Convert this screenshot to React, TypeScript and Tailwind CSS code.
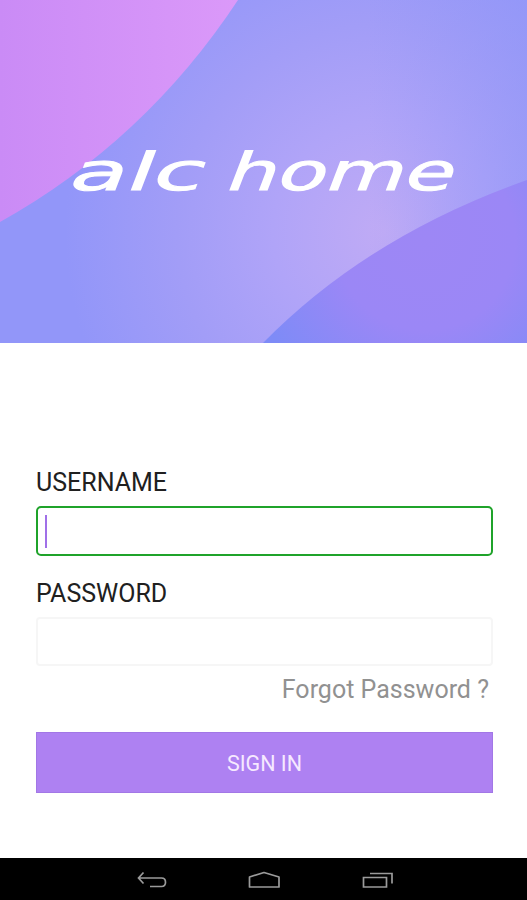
function Hero() {
  return (
    <svg className="block h-[343px] w-full shrink-0" viewBox="0 0 527 343" role="img" aria-label="alc home">
      <defs>
        <radialGradient id="glow" gradientUnits="userSpaceOnUse" cx="385" cy="232" r="320">
          <stop offset="0" stopColor="#c0abf5" />
          <stop offset="0.35" stopColor="#b0a4f8" />
          <stop offset="0.65" stopColor="#a29df7" />
          <stop offset="1" stopColor="#9296f9" />
        </radialGradient>
        <linearGradient id="edge" x1="0" y1="0" x2="1" y2="0">
          <stop offset="0.7" stopColor="#8f96f8" stopOpacity="0" />
          <stop offset="1" stopColor="#8f96f8" stopOpacity="0.5" />
        </linearGradient>
        <linearGradient id="pink" x1="0" y1="0" x2="1" y2="0">
          <stop offset="0" stopColor="#ca8bf6" />
          <stop offset="1" stopColor="#db99f9" />
        </linearGradient>
        <radialGradient id="violet" gradientUnits="userSpaceOnUse" cx="425" cy="240" r="180">
          <stop offset="0" stopColor="#9d87f5" />
          <stop offset="0.5" stopColor="#9b87f6" />
          <stop offset="1" stopColor="#7e8bf7" />
        </radialGradient>
      </defs>
      <rect width="527" height="343" fill="url(#glow)" />
      <rect width="527" height="343" fill="url(#edge)" />
      <path d="M0 0H238Q145 141 0 222Z" fill="url(#pink)" />
      <path d="M263 343Q368 236 527 180V343Z" fill="url(#violet)" />
      <g transform="translate(0 190) skewX(-21)" className="fill-white stroke-white stroke-1 font-['DejaVu_Sans'] text-[52px]">
        <text x="66" y="0" textLength="134" lengthAdjust="spacingAndGlyphs">alc</text>
        <text x="223" y="0" textLength="227" lengthAdjust="spacingAndGlyphs">home</text>
      </g>
    </svg>
  );
}

function NavBar() {
  return (
    <nav className="flex h-[42px] shrink-0 items-center bg-black pl-[136px] pt-[2px]">
      <svg className="h-[20px] w-[32px]" viewBox="0 0 32 20" fill="none" stroke="#9b9b9b" strokeWidth="1.7">
        <path d="M7.500 2.500L2.500 8L7.500 13.500M2.500 8H25.500Q29.500 8 29.500 12.250Q29.500 16.500 25.500 16.500H14" />
      </svg>
      <svg className="ml-[79px] h-[20px] w-[34px]" viewBox="0 0 34 20" fill="none" stroke="#9b9b9b" strokeWidth="1.7" strokeLinejoin="round">
        <path d="M2.500 17V7L17 2.500L32 7V17Z" />
      </svg>
      <svg className="ml-[80px] h-[20px] w-[34px]" viewBox="0 0 34 20" fill="none" stroke="#9b9b9b" strokeWidth="1.7">
        <path d="M2.500 7.500H25.500V17H2.500Z M9 3.500H31V13.500" />
      </svg>
    </nav>
  );
}

export default function App() {
  return (
    <div className="flex h-[900px] w-full flex-col overflow-hidden bg-white font-['Roboto',sans-serif]">
      <Hero />
      <form className="flex flex-1 flex-col pl-9 pr-[34px] pt-[123px]" onSubmit={(e) => e.preventDefault()}>
        <label htmlFor="username" className="h-10 text-[25px] leading-[33px] text-[#202020]">
          USERNAME
        </label>
        <div className="flex h-[50px] items-center rounded-[5px] border-2 border-[#1fa32a] pl-[7px]">
          <span className="h-[33px] w-[2px] bg-[#a070e8]" />
          <input id="username" className="min-w-0 flex-1 outline-none" />
        </div>
        <label htmlFor="password" className="mt-[21px] h-10 text-[25px] leading-[33px] text-[#202020]">
          PASSWORD
        </label>
        <input id="password" type="password" className="h-[49px] rounded-[4px] border-2 border-[#f6f6f6] outline-none" />
        <a className="mt-[8px] h-[32px] self-end pr-[4px] text-[25px] leading-[32px] text-[#919191]">Forgot Password ?</a>
        <button className="mt-[26px] h-[61px] border border-[#a277e6] bg-[#ae81f2] pt-[3px] text-[21.500px] text-[#f6e9ff]">SIGN IN</button>
      </form>
      <NavBar />
    </div>
  );
}
